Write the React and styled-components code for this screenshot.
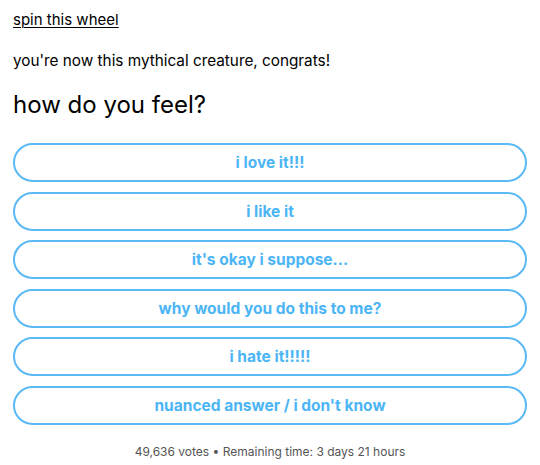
import React from "react";
import styled, { createGlobalStyle } from "styled-components";

const Global = createGlobalStyle`
  html, body { margin: 0; padding: 0; background: #fff; }
  body { font-family: "Inter", "Helvetica Neue", Arial, sans-serif; color: #000; }
`;

const Post = styled.div`
  width: 540px;
  padding: 9px 13px 0 13px;
  box-sizing: border-box;
`;

const Link = styled.a`
  display: inline-block;
  font-size: 15px;
  line-height: 22px;
  color: #000;
  text-decoration: underline;
  text-underline-offset: 2px;
  text-decoration-thickness: 1px;
`;

const Para = styled.p`
  margin: 19px 0 0;
  font-size: 15.3px;
  line-height: 22px;
`;

const Question = styled.h2`
  margin: 17px 0 0;
  font-size: 24px;
  font-weight: 400;
  line-height: 32px;
`;

const Options = styled.div`
  display: flex;
  flex-direction: column;
  gap: 9.6px;
  margin-top: 22px;
`;

const Option = styled.button`
  height: 39px;
  width: 100%;
  box-sizing: border-box;
  border: 2px solid #5bb9f6;
  border-radius: 20px;
  background: #fff;
  color: #4cb5f5;
  font-family: inherit;
  font-size: 15.5px;
  font-weight: 700;
  cursor: pointer;
`;

const Footer = styled.div`
  margin-top: 19px;
  text-align: center;
  font-size: 12px;
  color: #555;
`;

const options = [
  "i love it!!!",
  "i like it",
  "it's okay i suppose...",
  "why would you do this to me?",
  "i hate it!!!!!",
  "nuanced answer / i don't know",
];

export default function App() {
  return (
    <>
      <Global />
      <Post>
        <Link href="#">spin this wheel</Link>
        <Para>you're now this mythical creature, congrats!</Para>
        <Question>how do you feel?</Question>
        <Options>
          {options.map((o) => (
            <Option key={o}>{o}</Option>
          ))}
        </Options>
        <Footer>49,636 votes • Remaining time: 3 days 21 hours</Footer>
      </Post>
    </>
  );
}
